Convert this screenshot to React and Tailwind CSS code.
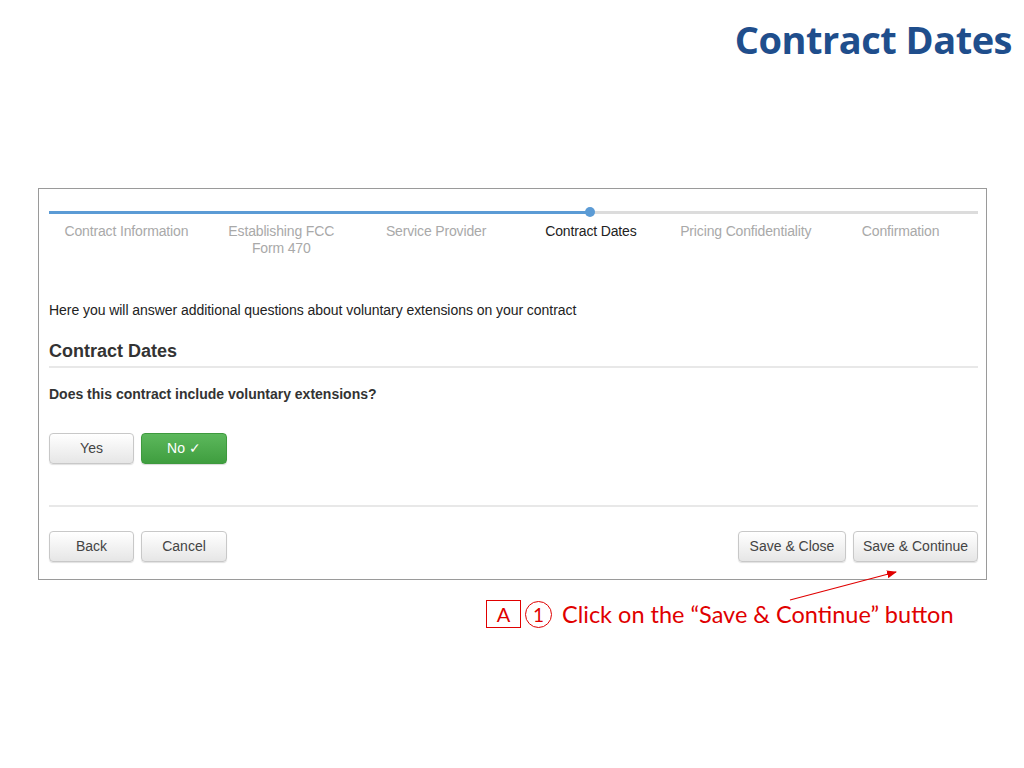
import React from "react";

const steps = [
  { label: ["Contract Information"], active: false },
  { label: ["Establishing FCC", "Form 470"], active: false },
  { label: ["Service Provider"], active: false },
  { label: ["Contract Dates"], active: true },
  { label: ["Pricing Confidentiality"], active: false },
  { label: ["Confirmation"], active: false },
];

function Btn({ children, className = "" }) {
  return (
    <button
      className={
        "h-[31px] rounded-[4px] border border-[#c8c8c8] bg-gradient-to-b from-white to-[#e6e6e6] text-[14px] text-[#444] shadow-[0_1px_1px_rgba(0,0,0,0.12)] " +
        className
      }
    >
      {children}
    </button>
  );
}

export default function App() {
  return (
    <div className="relative w-[1024px] h-[768px] bg-white overflow-hidden" style={{ fontFamily: '"Liberation Sans", Arial, sans-serif' }}>
      <div className="flex justify-end pr-[12px] pt-[15px]">
        <h1
          className="text-[#1f4e8c] text-[38px] font-bold leading-[48px] tracking-[-0.5px]"
          style={{ fontFamily: '"Open Sans", sans-serif' }}
        >
          Contract Dates
        </h1>
      </div>

      <div className="ml-[38px] mt-[125px] w-[949px] h-[392px] border border-[#9a9a9a] pl-[10px] pr-[8px] pt-[18px]">
        {/* progress */}
        <div className="relative h-[10px] flex items-center">
          <div className="flex-1 h-[3px] bg-[#dcdcdc] relative">
            <div className="absolute left-0 top-0 h-[3px] w-[541px] bg-[#5b9bd5]" />
          </div>
          <div className="absolute left-[536px] top-0 w-[10px] h-[10px] rounded-full bg-[#5b9bd5]" />
        </div>
        <div className="grid grid-cols-6 mt-[6px] h-[60px]">
          {steps.map((s, i) => (
            <div key={i} className={"text-center text-[14px] leading-[17px] tracking-[-0.15px] " + (s.active ? "text-[#222]" : "text-[#a9a9a9]")}>
              {s.label.map((l, j) => (
                <div key={j}>{l}</div>
              ))}
            </div>
          ))}
        </div>

        <p className="mt-[19px] text-[14px] leading-[17px] text-[#222] tracking-[-0.05px]">
          Here you will answer additional questions about voluntary extensions on your contract
        </p>

        <h2 className="mt-[21px] text-[18px] font-bold leading-[22px] text-[#333]">Contract Dates</h2>
        <div className="mt-[4px] h-[2px] bg-[#e8e8e8]" />

        <p className="mt-[18px] text-[14px] font-bold leading-[17px] text-[#333]">
          Does this contract include voluntary extensions?
        </p>

        <div className="mt-[30px] flex gap-[7px]">
          <Btn className="w-[85px]">Yes</Btn>
          <button className="w-[86px] h-[31px] rounded-[4px] border border-[#3e9a3e] bg-gradient-to-b from-[#5cb85c] to-[#3f9e3f] text-[14px] text-white shadow-[0_1px_1px_rgba(0,0,0,0.15)]">
            No ✓
          </button>
        </div>

        <div className="mt-[41px] h-[2px] bg-[#e8e8e8]" />

        <div className="mt-[24px] flex">
          <div className="flex gap-[7px]">
            <Btn className="w-[85px]">Back</Btn>
            <Btn className="w-[86px]">Cancel</Btn>
          </div>
          <div className="ml-auto flex gap-[7px]">
            <Btn className="w-[108px]">Save &amp; Close</Btn>
            <Btn className="w-[125px]">Save &amp; Continue</Btn>
          </div>
        </div>
      </div>

      {/* annotation */}
      <div className="ml-[486px] mt-[20px] flex items-center text-[#e00000]" style={{ fontFamily: 'Lato, "Open Sans", sans-serif' }}>
        <div className="w-[35px] h-[28px] border border-[#e00000] flex items-center justify-center text-[20px] leading-none">A</div>
        <div className="ml-[4px] w-[27px] h-[27px] rounded-full border-[1.5px] border-[#e00000] flex items-center justify-center text-[19px] leading-none">1</div>
        <div className="ml-[10px] text-[23.5px] leading-[28px]">Click on the “Save &amp; Continue” button</div>
      </div>

      <svg className="absolute left-0 top-0 pointer-events-none" width="1024" height="768">
        <defs>
          <marker id="ah" markerWidth="10" markerHeight="8" refX="9" refY="4" orient="auto" markerUnits="userSpaceOnUse">
            <path d="M0,0 L10,4 L0,8 Z" fill="#e00000" />
          </marker>
        </defs>
        <line x1="790" y1="600" x2="896" y2="572" stroke="#e00000" strokeWidth="1.2" markerEnd="url(#ah)" />
      </svg>
    </div>
  );
}
